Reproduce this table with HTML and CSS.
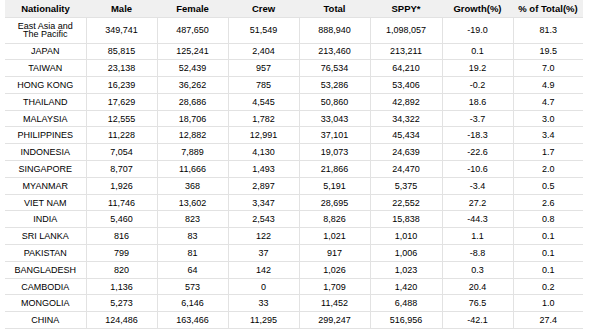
FILE: index.html
```html
<!DOCTYPE html>
<html lang="en">
<head>
    <meta charset="UTF-8" />
    <title>Visitor Arrivals by Nationality</title>
    <link rel="stylesheet" href="styles.css">
</head>
<body>
<table class="arrivals">
    <colgroup>
        <col class="col-nat">
        <col><col><col><col><col class="col-wide"><col><col class="col-last">
    </colgroup>
    <thead>
        <tr>
            <th>Nationality</th>
            <th>Male</th>
            <th>Female</th>
            <th>Crew</th>
            <th>Total</th>
            <th>SPPY*</th>
            <th>Growth(%)</th>
            <th>% of Total(%)</th>
        </tr>
    </thead>
    <tbody>
        <tr class="region">
            <td>East Asia and<br>The Pacific</td>
            <td>349,741</td><td>487,650</td><td>51,549</td><td>888,940</td><td>1,098,057</td><td>-19.0</td><td>81.3</td>
        </tr>
        <tr><td>JAPAN</td><td>85,815</td><td>125,241</td><td>2,404</td><td>213,460</td><td>213,211</td><td>0.1</td><td>19.5</td></tr>
        <tr><td>TAIWAN</td><td>23,138</td><td>52,439</td><td>957</td><td>76,534</td><td>64,210</td><td>19.2</td><td>7.0</td></tr>
        <tr><td>HONG KONG</td><td>16,239</td><td>36,262</td><td>785</td><td>53,286</td><td>53,406</td><td>-0.2</td><td>4.9</td></tr>
        <tr><td>THAILAND</td><td>17,629</td><td>28,686</td><td>4,545</td><td>50,860</td><td>42,892</td><td>18.6</td><td>4.7</td></tr>
        <tr><td>MALAYSIA</td><td>12,555</td><td>18,706</td><td>1,782</td><td>33,043</td><td>34,322</td><td>-3.7</td><td>3.0</td></tr>
        <tr><td>PHILIPPINES</td><td>11,228</td><td>12,882</td><td>12,991</td><td>37,101</td><td>45,434</td><td>-18.3</td><td>3.4</td></tr>
        <tr><td>INDONESIA</td><td>7,054</td><td>7,889</td><td>4,130</td><td>19,073</td><td>24,639</td><td>-22.6</td><td>1.7</td></tr>
        <tr><td>SINGAPORE</td><td>8,707</td><td>11,666</td><td>1,493</td><td>21,866</td><td>24,470</td><td>-10.6</td><td>2.0</td></tr>
        <tr><td>MYANMAR</td><td>1,926</td><td>368</td><td>2,897</td><td>5,191</td><td>5,375</td><td>-3.4</td><td>0.5</td></tr>
        <tr><td>VIET NAM</td><td>11,746</td><td>13,602</td><td>3,347</td><td>28,695</td><td>22,552</td><td>27.2</td><td>2.6</td></tr>
        <tr><td>INDIA</td><td>5,460</td><td>823</td><td>2,543</td><td>8,826</td><td>15,838</td><td>-44.3</td><td>0.8</td></tr>
        <tr><td>SRI LANKA</td><td>816</td><td>83</td><td>122</td><td>1,021</td><td>1,010</td><td>1.1</td><td>0.1</td></tr>
        <tr><td>PAKISTAN</td><td>799</td><td>81</td><td>37</td><td>917</td><td>1,006</td><td>-8.8</td><td>0.1</td></tr>
        <tr><td>BANGLADESH</td><td>820</td><td>64</td><td>142</td><td>1,026</td><td>1,023</td><td>0.3</td><td>0.1</td></tr>
        <tr><td>CAMBODIA</td><td>1,136</td><td>573</td><td>0</td><td>1,709</td><td>1,420</td><td>20.4</td><td>0.2</td></tr>
        <tr><td>MONGOLIA</td><td>5,273</td><td>6,146</td><td>33</td><td>11,452</td><td>6,488</td><td>76.5</td><td>1.0</td></tr>
        <tr><td>CHINA</td><td>124,486</td><td>163,466</td><td>11,295</td><td>299,247</td><td>516,956</td><td>-42.1</td><td>27.4</td></tr>
    </tbody>
</table>
</body>
</html>
```

FILE: styles.css
```css
* {
    box-sizing: border-box;
}
body {
    margin: 0;
    padding: 0 0 0 5px;
    background: #fff;
    font-family: "Liberation Sans", Arial, sans-serif;
    color: #000;
}
.arrivals {
    width: 578px;
    table-layout: fixed;
    border-collapse: collapse;
    border-spacing: 0;
}
.arrivals col {
    width: 71px;
}
.arrivals col.col-nat {
    width: 81px;
}
.arrivals col.col-wide {
    width: 72px;
}
.arrivals col.col-last {
    width: 70px;
}
.arrivals th {
    height: 17px;
    padding: 0;
    background: #f0f0f0;
    font-size: 9.5px;
    font-weight: bold;
    color: #000;
    text-align: center;
    border-bottom: 1px solid #e2e2e2;
}
.arrivals td {
    height: 16.8px;
    padding: 0;
    font-size: 9px;
    line-height: 10px;
    text-align: center;
    border-bottom: 1px solid #e2e2e2;
    border-left: 1px solid #e2e2e2;
}
.arrivals td:first-child {
    border-left: none;
}
.arrivals tr.region td {
    height: 26px;
    line-height: 8.5px;
}
```
